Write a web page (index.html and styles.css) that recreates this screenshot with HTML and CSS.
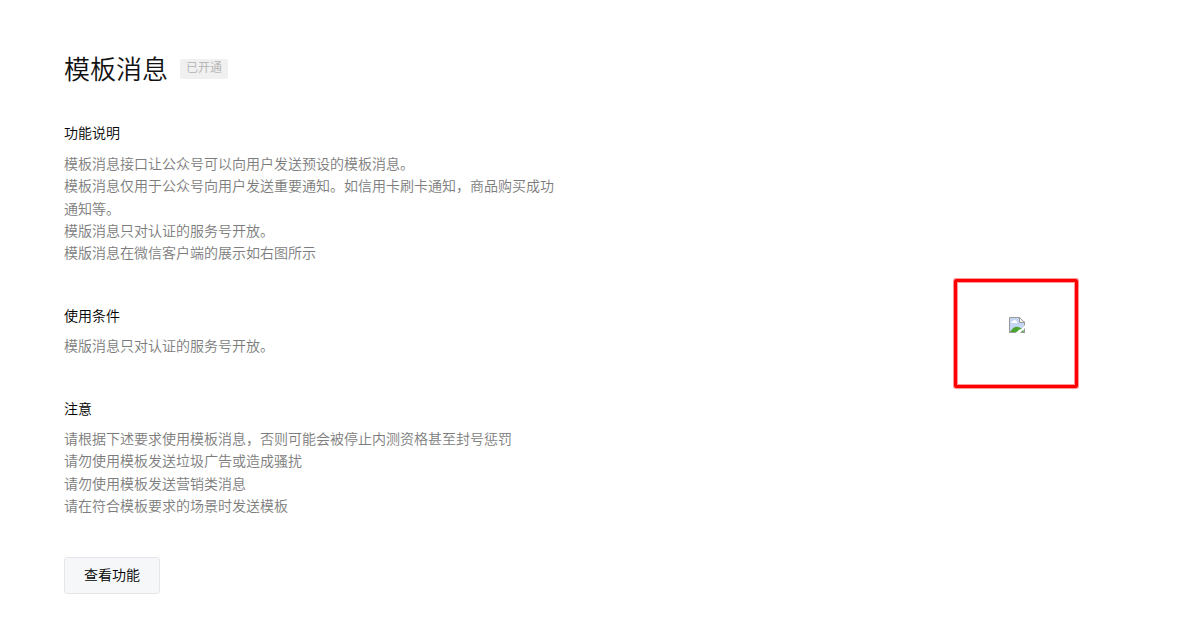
FILE: index.html
```html
<!DOCTYPE html>
<html lang="zh-CN">
<head>
    <meta charset="UTF-8">
    <meta name="viewport" content="width=device-width, initial-scale=1.0">
    <title>模板消息</title>
    <link rel="stylesheet" href="styles.css">
</head>
<body>

<div class="plugin">
    <div class="plugin-info">
        <div class="title">
            <h2>模板消息</h2>
            <span class="status">已开通</span>
        </div>
        <div class="section">
            <h4>功能说明</h4>
            <p>模板消息接口让公众号可以向用户发送预设的模板消息。</p>
            <p>模板消息仅用于公众号向用户发送重要通知。如信用卡刷卡通知，商品购买成功通知等。</p>
            <p>模版消息只对认证的服务号开放。</p>
            <p>模版消息在微信客户端的展示如右图所示</p>
        </div>
        <div class="section">
            <h4>使用条件</h4>
            <p>模版消息只对认证的服务号开放。</p>
        </div>
        <div class="section">
            <h4>注意</h4>
            <p>请根据下述要求使用模板消息，否则可能会被停止内测资格甚至封号惩罚</p>
            <p>请勿使用模板发送垃圾广告或造成骚扰</p>
            <p>请勿使用模板发送营销类消息</p>
            <p>请在符合模板要求的场景时发送模板</p>
        </div>
        <a class="btn" href="#">查看功能</a>
    </div>
    <div class="preview">
        <svg class="broken-img" width="16" height="16" viewBox="0 0 16 16">
            <path d="M.5 .5H11L15.5 5V15.5H.5Z" fill="#c5d6f5"/>
            <path d="M2 6C2 4.8 3 4.2 4 4.2C4.6 2.6 6.6 2.6 7 4.2C8 4.2 8.5 5 8.3 6Z" fill="#fff"/>
            <path d="M1 15C3 11.5 5.5 9.8 8 9.8C11 9.8 13.5 12 15 15Z" fill="#4ca52f"/>
            <path d="M.5 16V.5H11" fill="none" stroke="#999"/>
            <path d="M0 15.5H16M15.5 4.5V16" fill="none" stroke="#999"/>
            <path d="M10.5 .5V5.5H15.5Z" fill="#f4f4f4" stroke="#999"/>
            <path d="M6.5 16L10.5 12.5L12.5 12L16 8V11L11 16Z" fill="#fff"/>
        </svg>
    </div>
</div>

</body>
</html>
```

FILE: styles.css
```css
body {
    margin: 0;
    font-family: "Noto Sans CJK SC", sans-serif;
    font-size: 14px;
    font-weight: 350;
    line-height: 1.6;
    color: #000;
    background-color: #fff;
}
h2, h4, p {
    margin: 0;
    font-weight: inherit;
}
.plugin {
    display: flex;
    justify-content: space-between;
    align-items: flex-start;
    padding: 47.8px 121px 0 64px;
}
.plugin-info {
    width: 500px;
}
.title {
    display: flex;
    align-items: center;
    margin-bottom: 32px;
}
.title h2 {
    padding-bottom: 2px;
    font-size: 26px;
    line-height: 39.6px;
    color: #111;
}
.status {
    margin-left: 12px;
    padding: 0 6px 4px;
    font-size: 12px;
    line-height: 16px;
    color: #b2b2b2;
    background-color: #f0f0f0;
    border-radius: 2px;
}
.section {
    margin-bottom: 40px;
}
.section h4 {
    margin-bottom: 8px;
    font-size: 14px;
}
.section p {
    color: #7c7c7c;
}
.preview {
    display: flex;
    justify-content: center;
    box-sizing: border-box;
    width: 124px;
    height: 109px;
    margin-top: 231.2px;
    padding: 35px 0 0 1px;
    border: 3px solid #ff0000;
    border-radius: 2px;
    box-shadow: 0 0 0 1px rgba(255, 0, 0, 0.4), inset 0 0 0 1px rgba(255, 0, 0, 0.4);
}
.broken-img {
    display: block;
}
.btn {
    display: block;
    box-sizing: border-box;
    width: 96px;
    height: 37px;
    margin-top: 40.5px;
    line-height: 32px;
    text-align: center;
    color: #000;
    text-decoration: none;
    background-color: #f6f7f9;
    border: 1px solid #e4e6e9;
    border-radius: 3px;
}
```
